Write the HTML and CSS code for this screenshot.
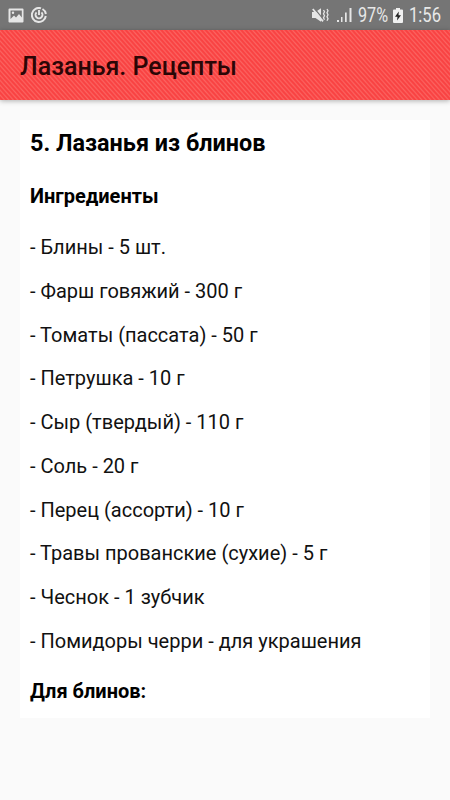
FILE: index.html
```html
<!DOCTYPE html>
<html lang="ru">
<head>
  <meta charset="UTF-8">
  <meta name="viewport" content="width=device-width, initial-scale=1.0">
  <title>Лазанья. Рецепты</title>
  <link rel="stylesheet" href="styles.css">
</head>
<body>

  <div class="status-bar">
    <div class="status-left">
      <svg class="icon-picture" width="16" height="15" viewBox="0 0 16 15">
        <path fill="#e6e6e6" fill-rule="evenodd" d="M1.500 .5h13a1 1 0 0 1 1 1v12a1 1 0 0 1-1 1h-13a1 1 0 0 1-1-1v-12a1 1 0 0 1 1-1zM2.500 2.500v8.500L6 7.500l2 2L11 6l2.800 3.500v-7z"/>
        <circle cx="5" cy="4.800" r="1.200" fill="#e6e6e6"/>
      </svg>
      <svg class="icon-sync" width="16" height="16" viewBox="0 0 16 16" fill="none" stroke="#e6e6e6">
        <path stroke-width="2" d="M10 1.300A7 7 0 1 0 14.800 9M14.900 7A7 7 0 0 0 11.500 2"/>
        <path stroke-width="1.900" d="M5.500 5.300A3.500 3.500 0 1 0 10.500 5.300M8 3v5"/>
      </svg>
    </div>
    <div class="status-right">
      <svg class="icon-mute" width="17" height="16" viewBox="0 0 17 16">
        <path fill="#e6e6e6" d="M0 5h3.500L9 1.200v13.600L3.500 11H0z"/>
        <path stroke="#757575" stroke-width="1.200" d="M2 1l9 11"/>
        <path stroke="#e6e6e6" stroke-width="1.800" d="M.8 2L11 14.400"/>
        <path fill="none" stroke="#e6e6e6" stroke-width="1.300" d="M11.500 3l1 1.800-1 2 1 2-1 2 1 2M15 2l1 1.800-1 2 1 2-1 2 1 2-1 2"/>
      </svg>
      <svg class="icon-signal" width="15" height="14" viewBox="0 0 15 14" fill="#e6e6e6">
        <path d="M0 12h2v2H0zM4 9h1.500v5H4zM8 4.500h1.700V14H8zM12.500 0h2v14h-2z"/>
      </svg>
      <span class="status-text percent">97%</span>
      <svg class="icon-battery" width="10" height="15" viewBox="0 0 10 15">
        <path fill="#f0f0f0" d="M3 0h4v1.500h2a1 1 0 0 1 1 1V14a1 1 0 0 1-1 1H1a1 1 0 0 1-1-1V2.500a1 1 0 0 1 1-1h2z"/>
        <path fill="#222" d="M5.800 3.500L2 8.800h2.500L4 12.500l4-5.300H5.500z"/>
      </svg>
      <span class="status-text clock">1:56</span>
    </div>
  </div>

  <header class="toolbar">
    <div class="toolbar-title">Лазанья. Рецепты</div>
  </header>

  <main class="recipe">
    <h1>5. Лазанья из блинов</h1>
    <h2>Ингредиенты</h2>
    <p>- Блины - 5 шт.</p>
    <p>- Фарш говяжий - 300 г</p>
    <p>- Томаты (пассата) - 50 г</p>
    <p>- Петрушка - 10 г</p>
    <p>- Сыр (твердый) - 110 г</p>
    <p>- Соль - 20 г</p>
    <p>- Перец (ассорти) - 10 г</p>
    <p>- Травы прованские (сухие) - 5 г</p>
    <p>- Чеснок - 1 зубчик</p>
    <p>- Помидоры черри - для украшения</p>
    <h2 class="subsection">Для блинов:</h2>
  </main>

</body>
</html>
```

FILE: styles.css
```css
* {
  box-sizing: border-box;
}

body {
  margin: 0;
  min-height: 800px;
  background-color: #fafafa;
  color: #111;
  font-family: Roboto, sans-serif;
}

.status-bar {
  display: flex;
  justify-content: space-between;
  align-items: center;
  height: 30px;
  padding: 0 9px 0 8px;
  background-color: #757575;
}

.status-left,
.status-right {
  display: flex;
  align-items: center;
}

.status-left {
  gap: 7px;
}

.icon-signal {
  margin-left: 8px;
}

.icon-battery {
  margin: 0 6px 0 5px;
}

.status-text {
  color: #e8e8e8;
  font-size: 20px;
  line-height: 30px;
  white-space: nowrap;
  transform-origin: left center;
}

/* the status bar digits are condensed */
.percent {
  width: 30px;
  margin-left: 6px;
  transform: scaleX(0.81);
}

.clock {
  width: 32px;
  transform: scaleX(0.83);
}

.toolbar {
  display: flex;
  align-items: center;
  height: 70px;
  padding: 3px 20px 0;
  background: repeating-linear-gradient(48deg, #fb6461 0, #f94343 1.200px, #f94343 2.200px, #fb6461 3.300px);
  box-shadow: 0 1px 5px rgba(0, 0, 0, 0.3);
}

.toolbar-title {
  color: #2b0606;
  font-size: 25px;
  font-weight: 500;
}

.recipe {
  height: 598px;
  margin: 20px 20px 0;
  padding: 7px 10px 0;
  background-color: #fff;
}

h1 {
  margin: 0 0 25px;
  color: #000;
  font-size: 23.400px;
  line-height: 32px;
}

h2 {
  margin: 0 0 27px;
  color: #000;
  font-size: 20px;
  line-height: 24px;
}

.recipe p {
  margin: 0 0 19.750px;
  font-size: 20px;
  line-height: 24px;
}

.recipe .subsection {
  margin: 26px 0 0;
}
```
